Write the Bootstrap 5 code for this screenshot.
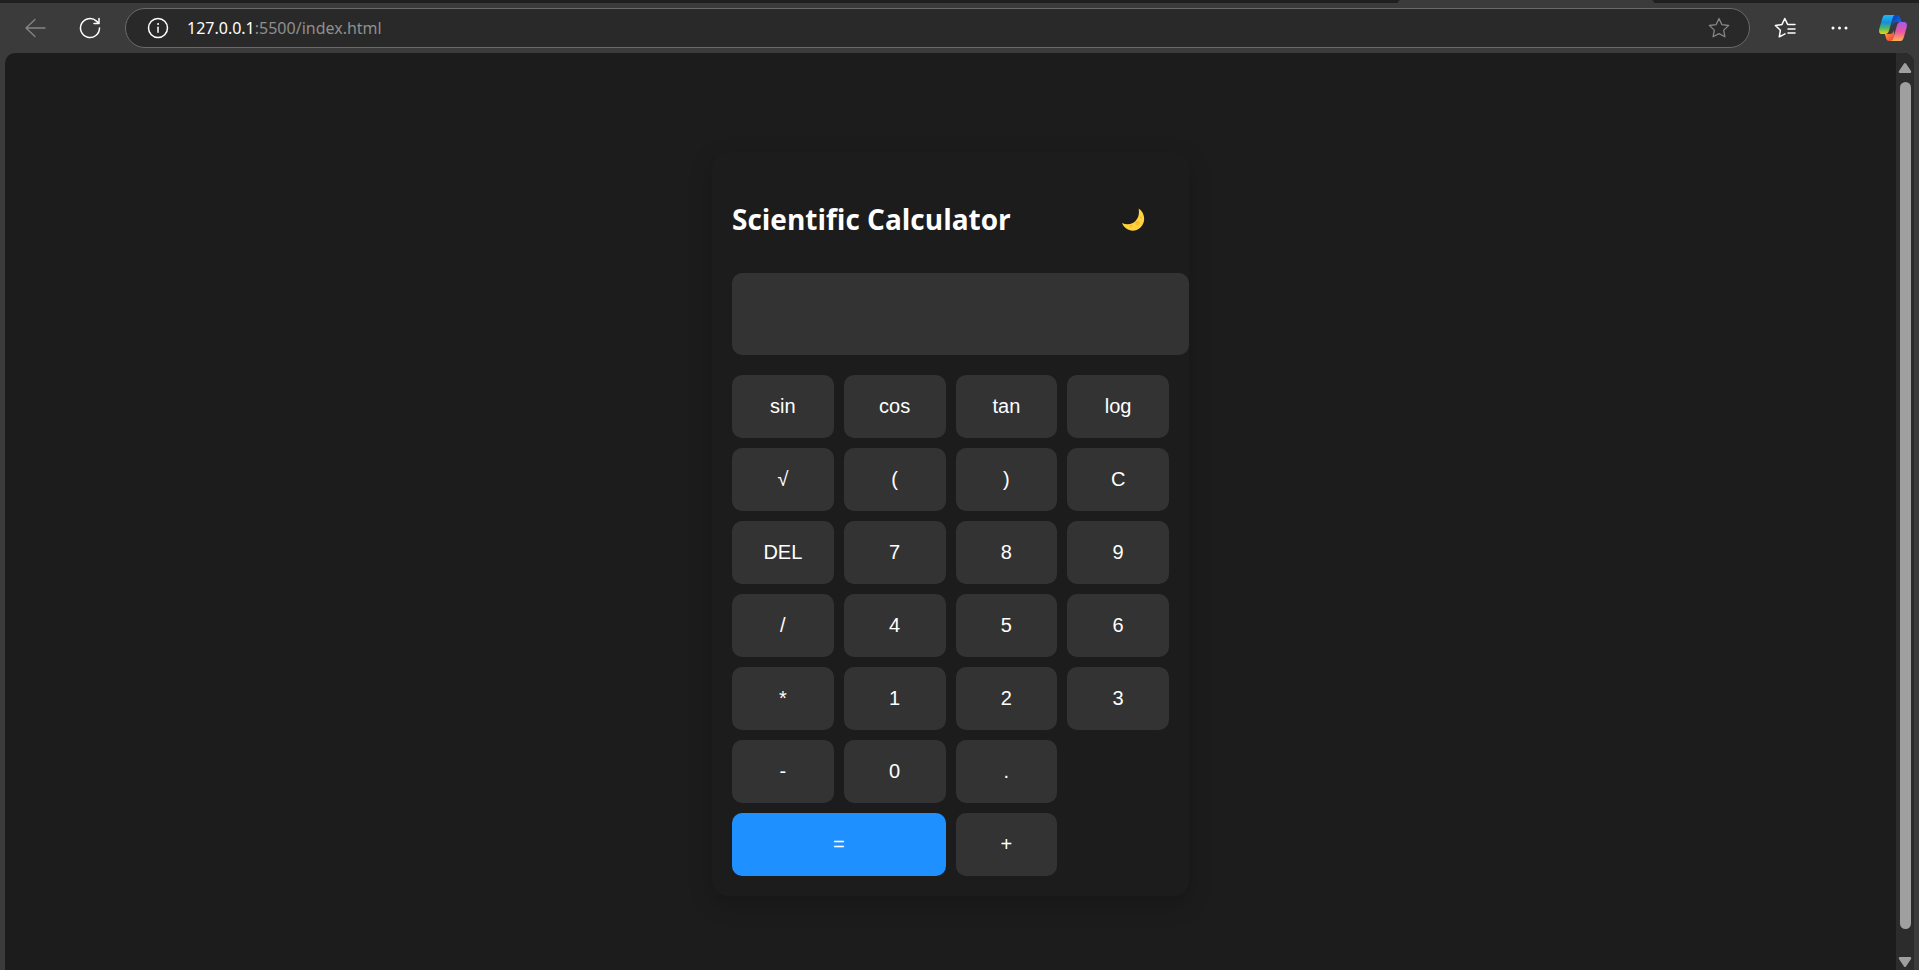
<!DOCTYPE html>
<html lang="en">
<head>
<meta charset="utf-8">
<meta name="viewport" content="width=device-width, initial-scale=1">
<title>Scientific Calculator</title>
<link href="https://cdn.jsdelivr.net/npm/bootstrap@5.3.0/dist/css/bootstrap.min.css" rel="stylesheet">
<style>
  body { background: #3b3b3b; color: #fff; font-family: "Open Sans", "Noto Sans", sans-serif; }
  .tab-strip { height: 3px; background: #202020; }
  .tab-strip .strip-left { flex: 1398 1 0; }
  .tab-strip .active-tab { flex: 256 1 0; background: #3b3b3b; border-radius: 4px 4px 0 0; }
  .tab-strip .strip-right { flex: 265 1 0; }
  .toolbar { height: 50px; padding: 0 7px 0 17px; }
  .tool-btn { width: 38px; height: 38px; padding: 0; border: 0; background: transparent; color: #fff; display: flex; align-items: center; justify-content: center; flex: none; }
  .tool-btn.dim { color: #858585; }
  .address { height: 40px; background: #292929; border: 1px solid #6a6a6a; border-radius: 20px; margin: 0 16px 0 16px; padding: 0 11px 0 13px; }
  .url { font-size: 16px; line-height: 24px; color: #8f8f8f; text-decoration: none; margin-left: 10px; font-family: "Noto Sans", sans-serif; }
  .url span { color: #fff; }
  .viewport-frame { margin: 0 5px; background: #1c1c1c; border-radius: 10px 10px 0 0; min-height: 0; }
  .scroll-rail { width: 18px; background: #2c2c2c; padding: 10px 0 3px; flex: none; }
  .scroll-rail .thumb { width: 11px; background: #9f9f9f; border-radius: 6px; margin: 9px 0 28px; }
  .stage { padding-top: 99px; }
  .calculator { width: 100%; max-width: 477px; padding: 20px; background: #1c1c1c; border-radius: 15px; box-shadow: 0 8px 24px rgba(0,0,0,.2); }
  .calc-header { padding: 27px 0 34px; }
  .calc-title { font-size: 28px; line-height: 40px; font-weight: 700; margin: 0; white-space: nowrap; }
  .theme-btn { width: 72px; height: 40px; }
  .display { width: calc(100% + 20px); height: 82px; margin: 0 0 20px; border: 0; border-radius: 10px; background: #333; color: #fff; font-size: 30px; padding: 16px; text-align: right; }
  .keys { display: grid; grid-template-columns: repeat(4, 1fr); gap: 10px; }
  .key { border: 0; border-radius: 10px; background: #333; color: #fff; font: 20px/23px "Liberation Sans", sans-serif; padding: 20px 0; }
  .key:hover { background: #444; color: #fff; }
  .key.equals { grid-column: span 2; background: #1e90ff; }
  .key.plus { grid-column: 3; }
</style>
</head>
<body>
<div class="vh-100 d-flex flex-column overflow-hidden">
  <div class="tab-strip d-flex flex-shrink-0">
    <div class="strip-left"></div><div class="active-tab"></div><div class="strip-right"></div>
  </div>
  <header class="toolbar d-flex align-items-center flex-shrink-0">
    <button class="tool-btn dim" type="button" aria-label="Back">
      <svg width="22" height="22" viewBox="0 0 22 22" fill="none" stroke="currentColor" stroke-width="1.3" stroke-linecap="round" stroke-linejoin="round"><path d="M20 11H1M10 2.500L1 11l9 8.500"/></svg>
    </button>
    <button class="tool-btn ms-3" type="button" aria-label="Reload">
      <svg width="22" height="22" viewBox="0 0 22 22" fill="none" stroke="currentColor" stroke-width="1.500" stroke-linecap="round" stroke-linejoin="round"><path d="M20.500 11A9.500 9.500 0 1 1 17.500 4.100L20 6.500M20 1.500v5h-5"/></svg>
    </button>
    <div class="address d-flex align-items-center flex-grow-1">
      <button class="tool-btn" type="button" aria-label="Site information">
        <svg width="22" height="22" viewBox="0 0 22 22" fill="none" stroke="currentColor" stroke-width="1.500" stroke-linecap="round"><circle cx="11" cy="11" r="9.500"/><path d="M11 10.200v5"/><circle cx="11" cy="7" r=".5" fill="currentColor" stroke-width="1"/></svg>
      </button>
      <a class="url" href="#"><span>127.0.0.1</span>:5500/index.html</a>
      <button class="tool-btn dim ms-auto" type="button" aria-label="Add to favorites">
        <svg width="22" height="22" viewBox="0 0 22 22" fill="none" stroke="currentColor" stroke-width="1.300" stroke-linejoin="round"><path d="M11 1.500l2.900 6.100 6.700.9-4.900 4.600 1.200 6.700-5.900-3.200-5.900 3.200 1.200-6.700L1.400 8.500l6.700-.9z"/></svg>
      </button>
    </div>
    <button class="tool-btn" type="button" aria-label="Favorites">
      <svg width="22" height="22" viewBox="0 0 22 22" fill="none" stroke="currentColor" stroke-width="1.500" stroke-linecap="round" stroke-linejoin="round"><path d="M11 16.800l-5.700 3 1.100-6.600L1.400 8.500l6.500-.9L10.800 1.500l2.700 5.600M14 7.600h7M14 12h7M14 16h7"/></svg>
    </button>
    <button class="tool-btn ms-3" type="button" aria-label="Settings and more">
      <svg width="22" height="22" viewBox="0 0 22 22" fill="currentColor"><circle cx="5" cy="11" r="1.500"/><circle cx="11.500" cy="11" r="1.500"/><circle cx="18" cy="11" r="1.500"/></svg>
    </button>
    <button class="tool-btn ms-3" type="button" aria-label="Copilot">
      <svg width="30" height="28" viewBox="0 0 30 28">
        <defs>
          <linearGradient id="cool" x1="0" y1="0" x2="0" y2="1"><stop offset="0" stop-color="#22b8f5"/><stop offset=".4" stop-color="#168fd8"/><stop offset=".7" stop-color="#4fb968"/><stop offset="1" stop-color="#f5d500"/></linearGradient>
          <linearGradient id="warm" x1="0" y1="0" x2="0" y2="1"><stop offset="0" stop-color="#a05cf0"/><stop offset=".5" stop-color="#ec559f"/><stop offset="1" stop-color="#ffb052"/></linearGradient>
          <linearGradient id="deep" x1="0" y1="0" x2="1" y2="1"><stop offset="0" stop-color="#0a35b5"/><stop offset="1" stop-color="#1676e8"/></linearGradient>
          <linearGradient id="fire" x1="0" y1="0" x2="1" y2="1"><stop offset="0" stop-color="#ffa340"/><stop offset="1" stop-color="#e83c35"/></linearGradient>
        </defs>
        <path fill="url(#deep)" d="M14 1h5c2 0 2.700 1.200 3.200 3L23.500 8h-4.800c-2.500 0-3.600 1.200-4.300 3.500z"/>
        <path fill="url(#fire)" d="M16.500 27h-5.200c-2 0-2.800-1-3.300-3l-1.200-4h5c2.200 0 3.200-1.200 4-3.500z"/>
        <path fill="url(#cool)" d="M7.500 1h10c-2 0-2.600 2-3.200 4.200l-3 10.300C10.300 19 9.500 20 6.500 20H4.200C1 20 .6 17.300 1.400 14.400L4 5.200C4.800 2.500 5.500 1 7.500 1z"/>
        <path fill="url(#warm)" d="M22.500 27h-10c2 0 2.600-2 3.200-4.200l3-10.300C19.700 9 20.500 8 23.500 8h2.300c3.200 0 3.600 2.700 2.800 5.600L26 22.800c-.8 2.700-1.500 4.200-3.500 4.200z"/>
      </svg>
    </button>
  </header>

  <div class="viewport-frame d-flex flex-grow-1 overflow-hidden">
    <main class="stage flex-grow-1 d-flex justify-content-center align-items-start">
      <section class="calculator">
        <div class="calc-header d-flex justify-content-between align-items-center">
          <h1 class="calc-title">Scientific Calculator</h1>
          <button class="theme-btn btn border-0 p-0 d-flex align-items-center justify-content-center" type="button" aria-label="Toggle theme">
            <svg width="24" height="24" viewBox="0 0 24 24"><path fill="#ffd23e" d="M17.600 1.500C24.500 6.100 25 15.500 19.200 20.800 13.200 26.100 4 23.800 1 16.100c5.200 2.300 10.600 1.400 13.900-2.500C18 10 18.400 5.500 17.600 1.500z"/><circle cx="16.500" cy="16" r="2.200" fill="#f5bd35"/><circle cx="10" cy="19" r="1.500" fill="#f5bd35"/><circle cx="20" cy="10.500" r="1" fill="#f5bd35"/></svg>
          </button>
        </div>
        <input class="display d-block" type="text" aria-label="Result" readonly>
        <div class="keys">
          <button class="key" type="button">sin</button>
          <button class="key" type="button">cos</button>
          <button class="key" type="button">tan</button>
          <button class="key" type="button">log</button>
          <button class="key" type="button">√</button>
          <button class="key" type="button">(</button>
          <button class="key" type="button">)</button>
          <button class="key" type="button">C</button>
          <button class="key" type="button">DEL</button>
          <button class="key" type="button">7</button>
          <button class="key" type="button">8</button>
          <button class="key" type="button">9</button>
          <button class="key" type="button">/</button>
          <button class="key" type="button">4</button>
          <button class="key" type="button">5</button>
          <button class="key" type="button">6</button>
          <button class="key" type="button">*</button>
          <button class="key" type="button">1</button>
          <button class="key" type="button">2</button>
          <button class="key" type="button">3</button>
          <button class="key" type="button">-</button>
          <button class="key" type="button">0</button>
          <button class="key" type="button">.</button>
          <button class="key equals" type="button">=</button>
          <button class="key plus" type="button">+</button>
        </div>
      </section>
    </main>
    <div class="scroll-rail d-flex flex-column align-items-center" aria-hidden="true">
      <svg class="flex-shrink-0" width="14" height="10" viewBox="0 0 14 10"><path fill="#9f9f9f" d="M6 .6Q7-.6 8 .6l5 7.500Q13.800 10 12 10H2Q.2 10 1 8.100z"/></svg>
      <div class="thumb flex-grow-1"></div>
      <svg class="flex-shrink-0" width="14" height="10" viewBox="0 0 14 10"><path fill="#9f9f9f" d="M6 9.400Q7 10.600 8 9.400l5-7.500Q13.800 0 12 0H2Q.2 0 1 1.900z"/></svg>
    </div>
  </div>
</div>
<script src="https://cdn.jsdelivr.net/npm/bootstrap@5.3.0/dist/js/bootstrap.bundle.min.js"></script>
</body>
</html>
